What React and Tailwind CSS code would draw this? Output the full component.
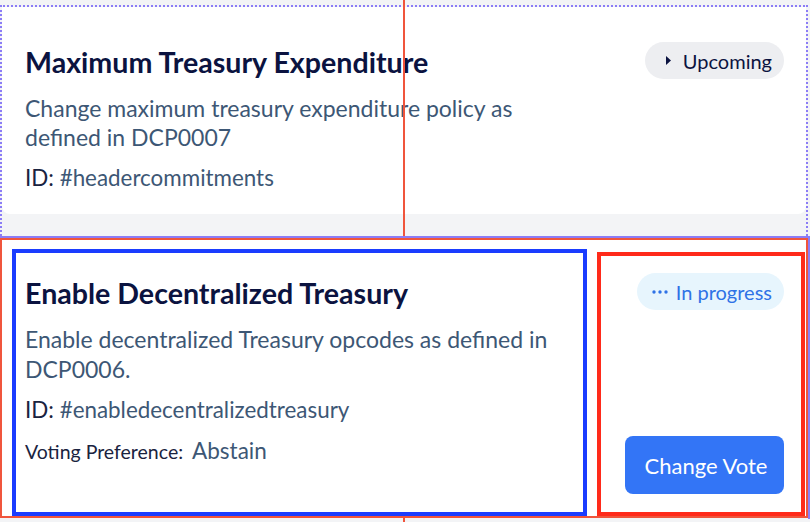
import React from "react";

const font = { fontFamily: '"Source Sans Pro", Lato, "Noto Sans", sans-serif' };

const Pill = ({ tone, children }) => (
  <span
    className={
      tone === "blue"
        ? "inline-flex h-[37px] items-center gap-[8px] rounded-full bg-[#e7f5fd] pl-[15px] pr-[12px] text-[20px] text-[#2f72e6]"
        : "inline-flex h-[37px] items-center gap-[12px] rounded-full bg-[#edeef1] pl-[21px] pr-[12px] text-[20px] text-[#0b1340]"
    }
  >
    {children}
  </span>
);

export default function App() {
  return (
    <div
      className="relative h-[522px] w-[810px] overflow-hidden bg-[#f3f4f6]"
      style={font}
    >
      {/* debug guide line */}
      <div className="absolute left-[403px] top-0 z-[5] h-full w-[2px] bg-[#f0553c]" />

      {/* upcoming proposal */}
      <div className="relative mt-[5px] mr-[2px] h-[231px] border-2 border-b-0 border-dotted border-[#8b7cf6]">
        <div className="flex h-[207px] justify-between rounded-b-lg bg-white pl-[23px] pr-[22px] pt-[37px]">
          <div className="w-[560px]">
            <h2 className="text-[28.6px] font-bold leading-[36px] text-[#0b1340]">
              Maximum Treasury Expenditure
            </h2>
            <p className="mt-[14px] text-[23px] leading-[29px] text-[#3d5775]">
              Change maximum treasury expenditure policy as defined in DCP0007
            </p>
            <p className="mt-[12px] text-[22.4px] leading-[28px] text-[#3d5775]">
              <span className="text-[#1a2340]">ID:</span> #headercommitments
            </p>
          </div>
          <div className="-mt-[2px]">
            <Pill>
              <svg width="5" height="9" viewBox="0 0 5 9">
                <path d="M0 0 L5 4.5 L0 9 Z" fill="#0b1340" />
              </svg>
              Upcoming
            </Pill>
          </div>
        </div>
      </div>

      {/* in-progress proposal */}
      <div className="relative z-10 h-[283px] border-t-2 border-r-2 border-[#8b7cf6]">
        <div className="flex h-[280px] gap-[10px] border-2 border-[#f0553c] bg-white pl-[10px] pr-[1px] pt-[9px]">
          <div className="h-[267px] w-[576px] border-4 border-[#1a3cff] pl-[9px] pt-[22px]">
            <h2 className="text-[28.6px] font-bold leading-[36px] text-[#0b1340]">
              Enable Decentralized Treasury
            </h2>
            <p className="mt-[13px] text-[23px] leading-[30px] text-[#3d5775]">
              Enable decentralized Treasury opcodes as defined in DCP0006.
            </p>
            <p className="mt-[12px] text-[22.4px] leading-[28px] text-[#3d5775]">
              <span className="text-[#1a2340]">ID:</span> #enabledecentralizedtreasury
            </p>
            <p className="mt-[13px] flex items-baseline gap-[9px] leading-[28px]">
              <span className="text-[19.5px] text-[#1a2340]">Voting Preference:</span>
              <span className="text-[22.5px] text-[#3d5775]">Abstain</span>
            </p>
          </div>
          <div className="mt-[3px] flex h-[264px] w-[208px] flex-col items-end justify-between border-4 border-[#ff2a1a] pb-[18px] pr-[17px] pt-[17px]">
            <Pill tone="blue">
              <svg width="16" height="4" viewBox="0 0 16 4">
                <circle cx="2" cy="2" r="1.7" fill="#2f72e6" />
                <circle cx="8" cy="2" r="1.7" fill="#2f72e6" />
                <circle cx="14" cy="2" r="1.7" fill="#2f72e6" />
              </svg>
              In progress
            </Pill>
            <button className="h-[58px] w-[159px] rounded-lg bg-[#3375f6] pl-[3px] text-[22px] text-white">
              Change Vote
            </button>
          </div>
        </div>
      </div>
    </div>
  );
}
